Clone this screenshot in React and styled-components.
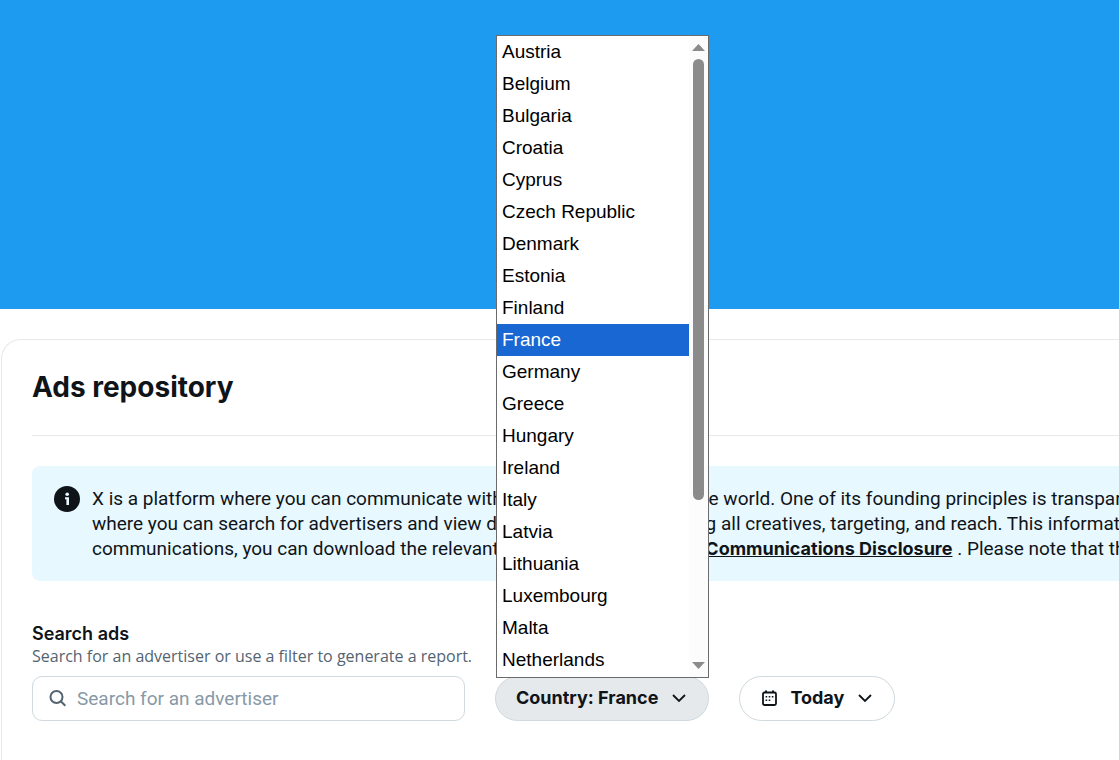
import React, { useState } from 'react';
import styled, { createGlobalStyle } from 'styled-components';

const GlobalStyle = createGlobalStyle`
  * {
    box-sizing: border-box;
  }

  body {
    margin: 0;
    background: #fff;
    color: #0f1419;
    font-family: Roboto, 'Noto Sans', sans-serif;
    overflow-x: hidden;
  }
`;

const headingFont = "Inter, 'Noto Sans', sans-serif";

const Hero = styled.div`
  height: 309px;
  background-color: #1d9bf0;
`;

const Card = styled.main`
  margin: 30px 0 0 1px;
  padding: 29px 0 40px 30px;
  border: 1px solid #e6e8ea;
  border-right: none;
  border-bottom: none;
  border-top-left-radius: 20px;
`;

const Title = styled.h1`
  margin: 0;
  padding-bottom: 30px;
  border-bottom: 1px solid #e6e8ea;
  font-family: ${headingFont};
  font-size: 28px;
  line-height: 36px;
  font-weight: 700;
`;

const Banner = styled.section`
  display: flex;
  gap: 12px;
  margin-top: 30px;
  padding: 20px 0 20px 22px;
  border-radius: 8px 0 0 8px;
  background-color: #e8f8ff;
  overflow: hidden;
`;

const InfoIcon = styled.svg`
  flex: none;
  width: 26px;
  height: 26px;
`;

const BannerText = styled.p`
  margin: 0;
  font-size: 19px;
  line-height: 25px;
  white-space: nowrap;
`;

const BannerLink = styled.a`
  color: inherit;
  font-family: ${headingFont};
  font-size: 18px;
  font-weight: 700;
`;

const Filters = styled.form`
  display: flex;
  align-items: flex-end;
  gap: 30px;
  margin-top: 41px;
`;

const SearchField = styled.div`
  flex: 0 1 433px;
  min-width: 0;
  display: flex;
  flex-direction: column;
`;

const Label = styled.label`
  font-family: ${headingFont};
  font-size: 18px;
  line-height: 24px;
  font-weight: 600;
`;

const Hint = styled.span`
  margin-bottom: 10px;
  color: #536471;
  font-family: 'Open Sans', 'Noto Sans', sans-serif;
  font-size: 16px;
  line-height: 20px;
  white-space: nowrap;
`;

const SearchBox = styled.div`
  display: flex;
  align-items: center;
  gap: 10px;
  height: 45px;
  padding: 0 16px;
  border: 1px solid #cfd9de;
  border-radius: 10px;
`;

const SearchInput = styled.input`
  flex: 1;
  min-width: 0;
  padding: 0;
  border: none;
  outline: none;
  background: none;
  color: #0f1419;
  font-family: inherit;
  font-size: 19px;

  &::placeholder {
    color: #8899a6;
  }
`;

const Dropdown = styled.div`
  position: relative;
`;

const PillButton = styled.button`
  display: flex;
  align-items: center;
  gap: 12px;
  height: 45px;
  padding: 0 20px 2px;
  border: 1px solid #cfd9de;
  border-radius: 23px;
  background-color: ${(props) => (props.$active ? '#e6e9eb' : '#fff')};
  color: #0f1419;
  font-family: ${headingFont};
  font-size: 18px;
  font-weight: 700;
  white-space: nowrap;
  cursor: pointer;
`;

const Popup = styled.div`
  position: absolute;
  left: 1px;
  right: 0;
  bottom: 43px;
  display: flex;
  border: 1px solid #6b6b6b;
  background-color: #fff;
`;

const CountryList = styled.select`
  flex: 1;
  min-width: 0;
  height: 641px;
  padding: 0;
  border: none;
  border-radius: 0;
  outline: none;
  background-color: #fff;
  color: #000;
  font-family: 'Liberation Sans', Arial, sans-serif;
  font-size: 19px;
  scrollbar-width: none;

  option {
    height: 32px;
    min-height: 32px;
    padding: 5px 5px 0;
  }

  option:checked {
    background: linear-gradient(#1967d2, #1967d2);
    -webkit-text-fill-color: #fff;
  }
`;

const Scrollbar = styled.div`
  flex: none;
  display: flex;
  flex-direction: column;
  align-items: center;
  width: 19px;
  background-color: #fcfcfc;
`;

const ScrollArrow = styled.svg`
  flex: none;
  width: 19px;
  height: 23px;
  fill: #8b8b8b;
`;

const ScrollTrack = styled.div`
  flex: 1;
  width: 11px;
`;

const ScrollThumb = styled.div`
  border-radius: 6px;
  background-color: #8b8b8b;
`;

const countries = [
  'Austria', 'Belgium', 'Bulgaria', 'Croatia', 'Cyprus', 'Czech Republic',
  'Denmark', 'Estonia', 'Finland', 'France', 'Germany', 'Greece', 'Hungary',
  'Ireland', 'Italy', 'Latvia', 'Lithuania', 'Luxembourg', 'Malta',
  'Netherlands', 'Poland', 'Portugal', 'Romania', 'Slovakia', 'Slovenia',
  'Spain', 'Sweden',
];

const visibleRows = 20;

function Chevron() {
  return (
    <svg width="18" height="18" viewBox="0 0 18 18" fill="none" stroke="#0f1419" strokeWidth="1.800">
      <path d="M3 6l6 6 6-6" />
    </svg>
  );
}

function CalendarIcon() {
  return (
    <svg width="18" height="18" viewBox="0 0 18 18" fill="#0f1419">
      <rect x="3" y="3.500" width="13" height="12.500" rx="1.500" fill="none" stroke="#0f1419" strokeWidth="1.800" />
      <path d="M5 1.500h2v2.500H5zM12 1.500h2v2.500h-2z" />
      <path d="M8.700 7h1.600v1.600H8.700zM11.800 7h1.600v1.600h-1.600zM5.600 7h1.600v1.600H5.600zM5.600 10.500h1.600v1.600H5.600zM8.700 10.500h1.600v1.600H8.700z" />
    </svg>
  );
}

function App() {
  const [search, setSearch] = useState('');
  const [country, setCountry] = useState('France');
  const [open, setOpen] = useState(true);
  const [scroll, setScroll] = useState(0);

  const handleCountry = (e) => {
    setCountry(e.target.value);
    setOpen(false);
  };

  const handleScroll = (e) => {
    setScroll(e.target.scrollTop / e.target.scrollHeight);
  };

  return (
    <>
      <GlobalStyle />
      <Hero />
      <Card>
        <Title>Ads repository</Title>
        <Banner>
          <InfoIcon viewBox="0 0 26 26">
            <circle cx="13" cy="13" r="13" fill="#0f1419" />
            <circle cx="13.200" cy="8.200" r="1.800" fill="#e8f8ff" />
            <path d="M11 11.300h4V19h-2.600v-5.700H11z" fill="#e8f8ff" />
          </InfoIcon>
          <BannerText>
            X is a platform where you can communicate with users from all around the world. One of its founding principles is transparency.
            <br />
            where you can search for advertisers and view details for all ads, including all creatives, targeting, and reach. This information
            <br />
            communications, you can download the relevant report and <BannerLink href="#disclosure">Commercial Communications Disclosure</BannerLink> . Please note that the report
          </BannerText>
        </Banner>
        <Filters onSubmit={(e) => e.preventDefault()}>
          <SearchField>
            <Label htmlFor="advertiser">Search ads</Label>
            <Hint id="advertiser-hint">Search for an advertiser or use a filter to generate a report.</Hint>
            <SearchBox>
              <svg width="18" height="18" viewBox="0 0 18 18" fill="none" stroke="#536471" strokeWidth="2">
                <circle cx="7.500" cy="7" r="6" />
                <path d="M11.800 11.300l4.500 4.500" />
              </svg>
              <SearchInput
                id="advertiser"
                aria-describedby="advertiser-hint"
                placeholder="Search for an advertiser"
                value={search}
                onChange={(e) => setSearch(e.target.value)}
              />
            </SearchBox>
          </SearchField>
          <Dropdown>
            <PillButton type="button" $active={open} aria-expanded={open} onClick={() => setOpen(!open)}>
              Country: {country}
              <Chevron />
            </PillButton>
            {open && (
              <Popup>
                <CountryList
                  size={visibleRows}
                  aria-label="Country"
                  value={country}
                  onChange={handleCountry}
                  onScroll={handleScroll}
                >
                  {countries.map((name) => (
                    <option key={name} value={name}>{name}</option>
                  ))}
                </CountryList>
                <Scrollbar aria-hidden="true">
                  <ScrollArrow viewBox="0 0 19 23"><path d="M3 15h13L9.500 8z" /></ScrollArrow>
                  <ScrollTrack>
                    <div style={{ height: `${scroll * 100}%` }} />
                    <ScrollThumb style={{ height: `${(visibleRows / countries.length) * 100}%` }} />
                  </ScrollTrack>
                  <ScrollArrow viewBox="0 0 19 23"><path d="M3 8h13L9.500 15z" /></ScrollArrow>
                </Scrollbar>
              </Popup>
            )}
          </Dropdown>
          <PillButton type="button">
            <CalendarIcon />
            Today
            <Chevron />
          </PillButton>
        </Filters>
      </Card>
    </>
  );
}

export default App;
